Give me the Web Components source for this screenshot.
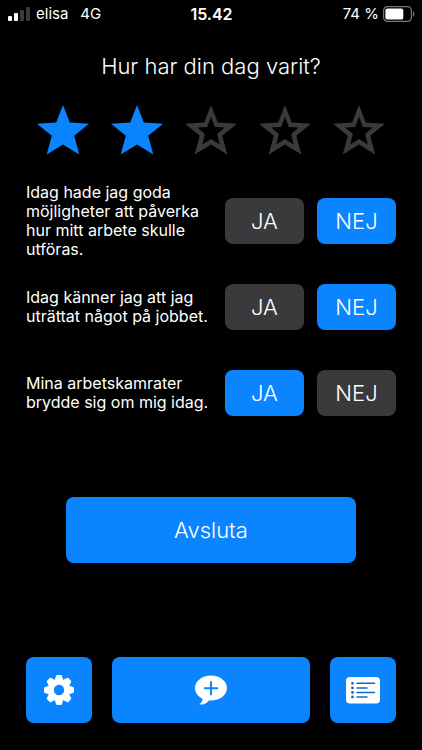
<!DOCTYPE html>
<html lang="sv">
<head>
<meta charset="utf-8">
<meta name="viewport" content="width=device-width, initial-scale=1">
<title>Hur har din dag varit?</title>
<style>
    body {
        --blue: #0b84ff;
        --grey: #3a3a3c;
        margin: 0;
        background: #000;
        color: #fff;
        font-family: Inter, "Liberation Sans", sans-serif;
    }
</style>
</head>
<body>
<day-survey>
    <phone-status slot="status" carrier="elisa" network="4G" time="15.42" battery="74"></phone-status>
    <star-rating value="2" max="5"></star-rating>
    <yes-no answer="nej">Idag hade jag goda möjligheter att påverka hur mitt arbete skulle utföras.</yes-no>
    <yes-no answer="nej">Idag känner jag att jag uträttat något på jobbet.</yes-no>
    <yes-no answer="ja">Mina arbetskamrater brydde sig om mig idag.</yes-no>
    <tab-bar slot="tabs"></tab-bar>
</day-survey>

<script>
// Page frame: status line, heading, questions, submit button, tabs
customElements.define('day-survey', class extends HTMLElement {
    constructor() {
        super();
        this.attachShadow({ mode: 'open' });
        this.shadowRoot.innerHTML = `
        <style>
        :host {
            display: flex;
            flex-direction: column;
            box-sizing: border-box;
            min-height: 100vh;
        }

        main {
            display: flex;
            flex-direction: column;
            padding: 0 26px;
        }

        h1 {
            margin: 24px 0;
            font-size: 22px;
            line-height: 28px;
            font-weight: 300;
            text-align: center;
        }

        .questions {
            display: flex;
            flex-direction: column;
            gap: 10px;
        }

        .submit {
            margin: 66px 40px 26px;
            height: 66px;
            border: 0;
            border-radius: 8px;
            background: var(--blue);
            color: inherit;
            font: inherit;
            font-size: 22px;
            font-weight: 300;
            cursor: pointer;
        }

        footer {
            margin-top: auto;
            padding: 0 26px 27px;
        }
        </style>
        <slot name="status"></slot>
        <main>
            <h1>Hur har din dag varit?</h1>
            <div class="questions"><slot></slot></div>
            <button class="submit" type="button">Avsluta</button>
        </main>
        <footer><slot name="tabs"></slot></footer>
    `;
    }
});

customElements.define('phone-status', class extends HTMLElement {
    connectedCallback() {
        if (this.shadowRoot) return;
        this.attachShadow({ mode: 'open' });
        const battery = Number(this.getAttribute('battery'));
        this.shadowRoot.innerHTML = `
        <style>
        :host {
            display: grid;
            grid-template-columns: 1fr auto 1fr;
            align-items: center;
            height: 28px;
            padding: 0 7px 0 8px;
            font-size: 15px;
            line-height: 20px;
        }

        .left, .right {
            display: flex;
            align-items: center;
        }

        .left {
            gap: 6px;
        }

        .network {
            margin-left: 6px;
        }

        .right {
            justify-content: flex-end;
            gap: 4px;
        }

        .time {
            font-size: 16px;
            font-weight: 600;
        }

        svg {
            display: block;
        }
        </style>
        <div class="left">
            <svg width="22" height="14" viewBox="0 0 22 14" aria-hidden="true">
                <rect y="9" width="4" height="5" rx="1" fill="#fff"/>
                <rect x="6" y="6" width="4" height="8" rx="1" fill="#fff"/>
                <rect x="12" y="3" width="4" height="11" rx="1" fill="#3a3a3c"/>
                <rect x="18" width="4" height="14" rx="1" fill="#3a3a3c"/>
            </svg>
            <span>${this.getAttribute('carrier')}</span>
            <span class="network">${this.getAttribute('network')}</span>
        </div>
        <span class="time">${this.getAttribute('time')}</span>
        <div class="right">
            <span>${battery} %</span>
            <svg width="32" height="16" viewBox="0 0 32 16" aria-hidden="true">
                <rect x=".6" y=".6" width="27.8" height="14.8" rx="4" fill="none" stroke="#77777a" stroke-width="1.2"/>
                <rect x="2.4" y="2.4" width="${24.2 * battery / 100}" height="11.2" rx="2.2" fill="#fff"/>
                <path d="M30 5.4c1.9.6 1.9 4.6 0 5.2z" fill="#77777a"/>
            </svg>
        </div>
    `;
    }
});

customElements.define('star-rating', class extends HTMLElement {
    connectedCallback() {
        if (this.shadowRoot) return;
        this.attachShadow({ mode: 'open' });
        const max = Number(this.getAttribute('max'));
        let stars = '';
        for (let i = 1; i <= max; i++) {
            stars += `
            <button type="button" data-value="${i}" aria-label="${i} av ${max}">
                <svg width="54" height="52" viewBox="0 0 54 52" aria-hidden="true">
                    <path class="full" d="M27 1 33.8 18.6 53 19.7 38.2 31.8 43.3 50.5 27 40.6 10.7 50.5 15.8 31.8 1 19.7 20.2 18.6Z"/>
                    <path class="hole" d="M27 12.8 30.800 22.900 40.8 23.5 33.1 30.1 35.8 40.4 27 34.900 18.2 40.4 20.9 30.1 13.2 23.5 23.2 22.900Z"/>
                </svg>
            </button>`;
        }
        this.shadowRoot.innerHTML = `
        <style>
        :host {
            display: flex;
            margin-bottom: 17px;
        }

        button {
            flex: 1;
            display: flex;
            justify-content: center;
            padding: 0;
            border: 0;
            background: none;
            cursor: pointer;
        }

        .full {
            fill: var(--grey);
        }

        .hole {
            fill: #000;
        }

        .on .full {
            fill: var(--blue);
        }

        .on .hole {
            fill: none;
        }
        </style>
        ${stars}
    `;
        this.shadowRoot.addEventListener('click', (event) => {
            const button = event.target.closest('button');
            if (button) {
                this.setAttribute('value', button.dataset.value);
                this.update();
            }
        });
        this.update();
    }

    update() {
        const value = Number(this.getAttribute('value'));
        this.shadowRoot.querySelectorAll('button').forEach((button) => {
            const n = Number(button.dataset.value);
            button.classList.toggle('on', n <= value);
            button.setAttribute('aria-pressed', n === value);
        });
    }
});

// Statement with a JA / NEJ pair, the text comes through the slot
customElements.define('yes-no', class extends HTMLElement {
    constructor() {
        super();
        this.attachShadow({ mode: 'open' });
        this.shadowRoot.innerHTML = `
        <style>
        :host {
            display: flex;
            align-items: center;
            gap: 12px;
            min-height: 76px;
        }

        p {
            flex: 1;
            margin: 0;
            font-size: 16px;
            line-height: 19px;
        }

        .answers {
            display: flex;
            gap: 13px;
        }

        button {
            width: 79px;
            height: 46px;
            padding: 0;
            border: 0;
            border-radius: 8px;
            background: var(--grey);
            color: inherit;
            font: inherit;
            font-size: 22px;
            font-weight: 300;
            cursor: pointer;
        }

        button[aria-pressed="true"] {
            background: var(--blue);
        }
        </style>
        <p id="statement"><slot></slot></p>
        <div class="answers" role="group" aria-labelledby="statement">
            <button type="button" data-answer="ja">JA</button>
            <button type="button" data-answer="nej">NEJ</button>
        </div>
    `;
        this.shadowRoot.addEventListener('click', (event) => {
            if (event.target.dataset.answer) {
                this.setAttribute('answer', event.target.dataset.answer);
                this.update();
            }
        });
    }

    connectedCallback() {
        this.update();
    }

    update() {
        this.shadowRoot.querySelectorAll('button').forEach((button) => {
            button.setAttribute('aria-pressed', button.dataset.answer === this.getAttribute('answer'));
        });
    }
});

customElements.define('tab-bar', class extends HTMLElement {
    constructor() {
        super();
        this.attachShadow({ mode: 'open' });
        this.shadowRoot.innerHTML = `
        <style>
        :host {
            display: grid;
            grid-template-columns: 66px 1fr 66px;
            gap: 20px;
        }

        button {
            display: flex;
            align-items: center;
            justify-content: center;
            height: 66px;
            padding: 0;
            border: 0;
            border-radius: 8px;
            background: var(--blue);
            cursor: pointer;
        }
        </style>
        <button type="button" aria-label="Inställningar">
            <svg width="30" height="30" viewBox="-15 -15 30 30" aria-hidden="true">
                <g fill="#fff">
                    <circle r="11"/>
                    <g id="teeth">
                        <path id="tooth" d="M-4.4-9.5-3-14Q-2.8-15-1.8-15H1.8Q2.8-15 3-14L4.4-9.5Z"/>
                        <use href="#tooth" transform="rotate(90)"/>
                        <use href="#tooth" transform="rotate(180)"/>
                        <use href="#tooth" transform="rotate(270)"/>
                    </g>
                    <use href="#teeth" transform="rotate(45)"/>
                </g>
                <circle r="5.2" fill="#0b84ff"/>
            </svg>
        </button>
        <button type="button" aria-label="Ny kommentar">
            <svg width="32" height="30" viewBox="0 0 32 30" aria-hidden="true">
                <path d="M16 .5C7.2.5 0 6 0 13c0 4.500 3 8.500 7.500 10.700C7.600 25.800 6.700 27.300 5 28.600c-.6.500-.3 1 .5 1 3.500-.1 6.300-1.500 8.500-4.200.7.100 1.300.1 2 .1 8.800 0 16-5.500 16-12.500S24.800.5 16 .5Z" fill="#fff"/>
                <path d="M16 7v12.500M9.700 13.200h12.600" stroke="#0b84ff" stroke-width="2" stroke-linecap="round"/>
            </svg>
        </button>
        <button type="button" aria-label="Lista">
            <svg width="34" height="28" viewBox="0 0 34 28" aria-hidden="true">
                <rect y="1" width="34" height="26.5" rx="4" fill="#fff"/>
                <g fill="#1268c8">
                    <circle cx="6.5" cy="7.3" r="1.4"/>
                    <circle cx="6.5" cy="11.9" r="1.4"/>
                    <circle cx="6.5" cy="16.4" r="1.4"/>
                    <circle cx="6.5" cy="21" r="1.4"/>
                </g>
                <path d="M11 7.3h17.5M11 11.9h10M11 16.4h17.5M11 21h10" stroke="#1268c8" stroke-width="1.5" stroke-linecap="round"/>
            </svg>
        </button>
    `;
    }
});
</script>
</body>
</html>
